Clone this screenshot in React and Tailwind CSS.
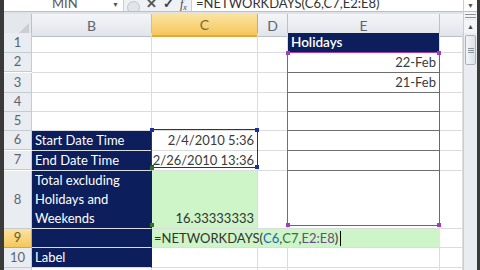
import React from 'react'

const NAVY = 'bg-[#0c1f5c] text-white'
const GREEN = 'bg-[#cdf5c8]'

function RowNum({ n, h, active }) {
  return (
    <div
      className={
        'flex items-center justify-center border-r border-b text-[13px] ' +
        (active
          ? 'bg-gradient-to-b from-[#fbe3a0] to-[#f4c75a] border-[#d9a63a] text-[#6b5a2a]'
          : 'bg-[#e9edf2] border-[#c5cbd3] text-[#5d6470]')
      }
      style={{ height: h }}
    >
      {n}
    </div>
  )
}

function Cell({ className = '', children }) {
  return <div className={'border-r border-b border-[#dadcdd] whitespace-nowrap ' + className}>{children}</div>
}

export default function App() {
  const rows = [
    { n: 1, h: 20 },
    { n: 2, h: 19 },
    { n: 3, h: 20 },
    { n: 4, h: 19 },
    { n: 5, h: 19 },
    { n: 6, h: 19 },
    { n: 7, h: 19 },
    { n: 8, h: 58 },
    { n: 9, h: 19 },
    { n: 10, h: 20 },
    { n: 11, h: 19 },
  ]

  const bText = {
    6: 'Start Date Time',
    7: 'End Date Time',
    10: 'Label',
  }

  return (
    <div className="w-[480px] h-[270px] overflow-hidden flex bg-[#2b2b2b] font-['Lato',sans-serif] text-[#333]">
      <div className="w-[4px] shrink-0 bg-[#3a3a3a]" />
      <div className="w-[459px] shrink-0 flex flex-col bg-white">
        {/* formula bar */}
        <div className="h-[12px] shrink-0 flex items-end bg-white border-b border-[#b8c0ca] overflow-hidden text-[13px] leading-none whitespace-nowrap">
          <div className="w-[120px] h-full flex items-end justify-between pr-1 border-r border-[#c8ced6]">
            <span className="ml-[48px] mb-[1px] text-[#555]">MIN</span>
            <span className="text-[7px] text-[#555] mb-[3px]">▼</span>
          </div>
          <div className="w-[68px] h-full flex items-end gap-[6px] pl-[3px] bg-[#eef1f5] border-r border-[#c8ced6]">
            <div className="w-[13px] h-[13px] rounded-full border border-[#c0c6ce] bg-[#e1e5ea] mb-[-3px]" />
            <span className="text-[13px] font-bold text-[#555] mb-[1px]">✕</span>
            <span className="text-[13px] font-bold text-[#444] mb-[1px]">✓</span>
            <span className="text-[12px] italic font-['Liberation_Serif',serif] text-[#444] mb-[1px]">f<sub className="text-[8px]">x</sub></span>
          </div>
          <span className="ml-[4px] mb-[1px] text-[#333]">=NETWORKDAYS(C6,C7,E2:E8)</span>
        </div>
        <div className="h-[2px] shrink-0 bg-[#dfe3e8]" />
        {/* column headers */}
        <div className="grid shrink-0 grid-cols-[28px_120px_106px_30px_152px_23px] h-[19px] text-[14px] text-[#5d6470]">
          <div className="bg-[#e4e8ed] border-r border-b border-[#b9c0c9] flex items-end justify-end">
            <div className="w-0 h-0 border-l-[11px] border-l-transparent border-b-[11px] border-b-[#c9ced6] mr-[2px] mb-[2px]" />
          </div>
          <div className="bg-gradient-to-b from-[#f3f5f8] to-[#e1e5ea] border-r border-b border-[#b9c0c9] flex items-center justify-center">B</div>
          <div className="bg-gradient-to-b from-[#fbe3a0] to-[#f4c75a] border-r border-b-2 border-[#e2a83a] flex items-center justify-center text-[#7a6430]">C</div>
          <div className="bg-gradient-to-b from-[#f3f5f8] to-[#e1e5ea] border-r border-b border-[#b9c0c9] flex items-center justify-center">D</div>
          <div className="bg-gradient-to-b from-[#f3f5f8] to-[#e1e5ea] border-r border-b border-[#b9c0c9] flex items-center justify-center">E</div>
          <div className="bg-gradient-to-b from-[#f3f5f8] to-[#e1e5ea] border-b border-[#b9c0c9]" />
        </div>
        {/* rows */}
        <div className="relative shrink-0 grid grid-cols-[28px_120px_106px_30px_152px_23px] text-[13px]">
          {rows.map((r) => {
            const n = r.n
            const navyB = n >= 6 && n <= 10
            return (
              <React.Fragment key={n}>
                <RowNum n={n} h={r.h} active={n === 9} />
                <Cell className={navyB ? NAVY + ' border-[#0c1f5c] border-r-[#0c1f5c]' : ''}>
                  {bText[n] && <div className="pl-[3px] leading-[19px]">{bText[n]}</div>}
                  {n === 8 && (
                    <div className="pl-[3px] leading-[19px]">
                      <div>Total excluding</div>
                      <div>Holidays and</div>
                      <div>Weekends</div>
                    </div>
                  )}
                </Cell>
                {n === 9 ? (
                  <div className={GREEN + ' col-span-3 border-b border-[#dadcdd] flex items-center pl-[2px] leading-none whitespace-nowrap'}>
                    <span>=NETWORKDAYS(</span>
                    <span className="text-[#2166b0]">C6</span>
                    <span>,</span>
                    <span className="text-[#3b6e3b]">C7</span>
                    <span>,</span>
                    <span className="text-[#6c4a82]">E2:E8</span>
                    <span>)</span>
                    <span className="w-[1px] h-[15px] bg-black ml-[2px]" />
                  </div>
                ) : (
                  <>
                    <Cell
                      className={
                        (n === 6 || n === 7
                          ? 'text-right pr-[3px] leading-[19px] text-[#3a3a3a] '
                          : '') + (n === 8 ? GREEN + ' flex items-end justify-end pr-[3px]' : '')
                      }
                    >
                      {n === 6 && '2/4/2010 5:36'}
                      {n === 7 && '2/26/2010 13:36'}
                      {n === 8 && <span className="leading-[19px]">16.33333333</span>}
                    </Cell>
                    <Cell />
                    <Cell
                      className={
                        n === 1
                          ? NAVY + ' border-[#0c1f5c] pl-[3px] leading-[19px] font-semibold text-[13.5px]'
                          : n >= 2 && n <= 7
                            ? 'border-b-[#6f6f6f] text-right pr-[3px] leading-[19px] text-[#3a3a3a]'
                            : ''
                      }
                    >
                      {n === 1 && 'Holidays'}
                      {n === 2 && '22-Feb'}
                      {n === 3 && '21-Feb'}
                    </Cell>
                  </>
                )}
                <Cell />
              </React.Fragment>
            )
          })}
          {/* reference box C6:C7 (blue) */}
          <div className="absolute left-[147px] top-[96px] w-[107px] h-[39px] border border-[#1f2f9a] pointer-events-none">
            <div className="absolute -left-[2px] -top-[2px] w-[4px] h-[4px] bg-[#1f2f9a]" />
            <div className="absolute -right-[2px] -top-[2px] w-[4px] h-[4px] bg-[#1f2f9a]" />
            <div className="absolute -left-[2px] -bottom-[2px] w-[4px] h-[4px] bg-[#1f2f9a]" />
            <div className="absolute -right-[2px] -bottom-[2px] w-[4px] h-[4px] bg-[#1f2f9a]" />
          </div>
          {/* reference box C8 (green corners) */}
          <div className="absolute left-[146px] top-[133px] w-[4px] h-[4px] bg-[#2f6e2f]" />
          <div className="absolute left-[146px] top-[190px] w-[4px] h-[4px] bg-[#2f6e2f]" />
          {/* reference box E2:E8 (purple) */}
          <div className="absolute left-[283px] top-[19px] w-[153px] h-[174px] border border-[#a33bbf] border-l-[#7a6a80] pointer-events-none">
            <div className="absolute -left-[2px] -top-[2px] w-[4px] h-[4px] bg-[#a33bbf]" />
            <div className="absolute -right-[2px] -top-[2px] w-[4px] h-[4px] bg-[#a33bbf]" />
            <div className="absolute -left-[2px] -bottom-[2px] w-[4px] h-[4px] bg-[#a33bbf]" />
            <div className="absolute -right-[2px] -bottom-[2px] w-[4px] h-[4px] bg-[#a33bbf]" />
          </div>
        </div>
      </div>
      {/* scrollbar */}
      <div className="w-[14px] shrink-0 flex flex-col bg-[#e9ecf0] border-l border-[#c8ced6]">
        <div className="h-[12px] shrink-0 bg-white border-b border-[#b8c0ca] flex items-center justify-center text-[7px] text-[#555]">▼</div>
        <div className="h-[7px] shrink-0 flex flex-col justify-center gap-[2px] px-[1px] bg-[#f2f4f7]">
          <div className="h-[1px] bg-[#8a929c]" />
          <div className="h-[1px] bg-[#8a929c]" />
        </div>
        <div className="h-[13px] shrink-0 mt-[1px] flex items-center justify-center text-[7px] text-[#444] bg-[#f2f4f7]">▲</div>
        <div className="mx-[1px] mt-[2px] h-[30px] shrink-0 rounded-[2px] border border-[#a9b1bb] bg-gradient-to-r from-[#f3f5f8] to-[#dde2e8] flex flex-col items-center justify-center gap-[1px]">
          <div className="w-[6px] h-[1px] bg-[#8a929c]" />
          <div className="w-[6px] h-[1px] bg-[#8a929c]" />
          <div className="w-[6px] h-[1px] bg-[#8a929c]" />
        </div>
        <div className="flex-1" />
      </div>
      <div className="w-[3px] shrink-0 bg-[#3a3a3a]" />
    </div>
  )
}
